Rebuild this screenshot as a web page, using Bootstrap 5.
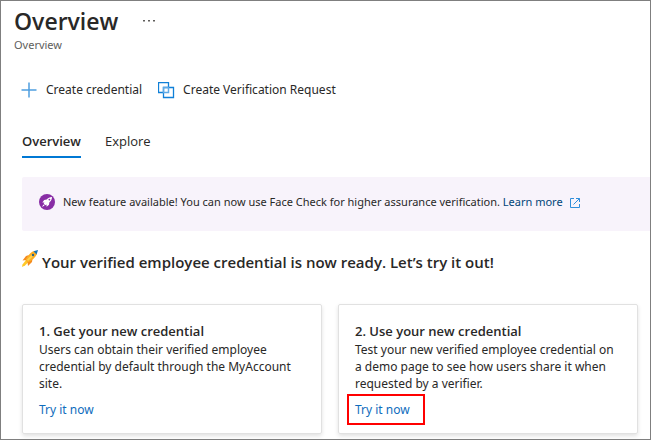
<!DOCTYPE html>
<html lang="en">
<head>
<meta charset="utf-8">
<meta name="viewport" content="width=device-width, initial-scale=1">
<title>Overview</title>
<link rel="stylesheet" href="https://cdn.jsdelivr.net/npm/bootstrap@5.3.0/dist/css/bootstrap.min.css">
<style>
body{font-family:"Segoe UI","Noto Sans","Open Sans",sans-serif;font-size:12px;line-height:17px;color:#292827;background:#fff}
h1,h2,h3,.tabs{font-family:"Segoe UI","Open Sans","Noto Sans",sans-serif}
.blade{border:1px solid #7f7f7f;min-height:100vh;overflow:hidden}
.blade-head{padding:4px 13px 0}
.blade-title{font-size:23px;line-height:32px;font-weight:600}
.blade-sub{color:#605e5c;font-size:11px;line-height:16px}
.more-btn{color:#605e5c;line-height:0}
.commands{padding:28px 20px 0;gap:16px}
.commands .btn{font-size:12px;line-height:18px;color:#292827;padding:0;border:0;border-radius:0}
.blade-body{padding:30px 0 5px 21px}
.tabs{gap:24px}
.tabs .nav-link{font-size:13px;line-height:24px;padding:0 0 3px;color:#292827;border-radius:0;border-bottom:2px solid transparent}
.tabs .nav-link.active{font-weight:600;border-color:#0078d4}
.notice{background:#f8f3fb;margin-top:19px;padding:14px 17px 18px;min-height:54px;gap:8px;font-size:11px;line-height:20px;border-radius:2px 0 0 2px}
.notice a{color:#004578;text-decoration:none}
.ready{font-size:15px;line-height:20px;font-weight:600;margin:19px 0 32px;gap:4px}
.ready span{padding-top:2px}
.tiles{--bs-gutter-x:16px;margin-right:4px}
.tile{border:1px solid #e1e1e1;border-radius:2px;box-shadow:0 2px 4px rgba(0,0,0,.12);padding:17px 16px 8px}
.tile h3{font-size:13px;line-height:19px;font-weight:600;margin:0}
.tile p{margin:0 0 2px}
.try{color:#0f6cbd;text-decoration:none;line-height:27px;padding:0 13px 0 6px;margin-left:-8px;border:2px solid transparent}
.try.marked{border-color:#f00}
</style>
<script defer src="https://cdn.jsdelivr.net/npm/bootstrap@5.3.0/dist/js/bootstrap.bundle.min.js"></script>
</head>
<body>
<main class="blade">
  <header class="blade-head">
    <div class="d-flex align-items-center gap-4">
      <h1 class="blade-title m-0">Overview</h1>
      <button type="button" class="btn p-0 border-0 more-btn" aria-label="More options">
        <svg width="14" height="4" viewBox="0 0 14 4" fill="currentColor"><path d="M1 1h2v1.500H1zM6 1h2v1.500H6zM11 1h2v1.500h-2z"/></svg>
      </button>
    </div>
    <div class="blade-sub">Overview</div>
  </header>
  <div class="d-flex flex-wrap commands">
    <button type="button" class="btn d-flex align-items-center gap-2">
      <svg width="17" height="17" viewBox="0 0 17 17" fill="none" stroke="#4f9fe0" stroke-width="1.500"><path d="M8 .500v15M.500 8h15"/></svg>
      <span>Create credential</span>
    </button>
    <button type="button" class="btn d-flex align-items-center gap-2">
      <svg width="17" height="17" viewBox="0 0 17 17" fill="none"><path d="M5.500 10.500h-5v-10h10v5" stroke="#1080d8" stroke-width="1.300"/><path d="M5.500 5.500h10v10h-10z" stroke="#1080d8" stroke-width="1.300"/><path d="M5.500 10.500v-5h5v5z" stroke="#5ea9e6" stroke-width="1.500"/></svg>
      <span>Create Verification Request</span>
    </button>
  </div>
  <div class="blade-body">
    <ul class="nav tabs" role="tablist">
      <li class="nav-item" role="presentation"><button type="button" class="nav-link bg-transparent border-top-0 border-start-0 border-end-0 active" role="tab" aria-selected="true">Overview</button></li>
      <li class="nav-item" role="presentation"><button type="button" class="nav-link bg-transparent border-top-0 border-start-0 border-end-0" role="tab" aria-selected="false">Explore</button></li>
    </ul>
    <div class="d-flex align-items-center notice">
      <svg class="flex-shrink-0" width="16" height="16" viewBox="0 0 16 16"><circle cx="8" cy="8" r="8" fill="#882da5"/><path d="M13 3c-2.300 0-4 .900-5.300 2.600L5.200 6 3.300 8.400l2.100.100-.700 1.200 1.600 1.600 1.200-.700.100 2.100L10 10.800l.400-2.500C12.100 7 13 5.300 13 3zM4.400 10.400 3 13l2.600-1.400z" fill="#fff"/><circle cx="10.400" cy="5.600" r=".9" fill="#882da5"/></svg>
      <span>New feature available! You can now use Face Check for higher assurance verification. <a href="#">Learn more
        <svg class="ms-1" width="10" height="10" viewBox="0 0 10 10" fill="none" stroke="#2f8edb"><path d="M4 .500H.500v9h9V6M6 .500h3.500V4M9.500.500 3.500 6.500"/></svg></a></span>
    </div>
    <h2 class="d-flex align-items-start ready">
      <svg class="flex-shrink-0" width="16" height="17" viewBox="0 0 16 17"><path d="M4 10 .500 14.500 0 17l3-1.500L6.500 12z" fill="#ffc928"/><path d="M7 5 4 6 .500 10.500 4 10zM10.500 9 10 12l-4 4-.500-4z" fill="#f58b1f"/><path d="M12 1C8 2.500 5.500 6 3.500 10.500L5.500 12.500C10 10.500 13 8 15 4z" fill="#fcae22"/><path d="M5 9.500 10 4.500l1.500 1.500L6 11z" fill="#ffd34d"/><path d="M16 0 11.500 1.200 14.600 4.500z" fill="#1674b8"/><circle cx="11" cy="5" r="1.200" fill="#26658b"/></svg>
      <span>Your verified employee credential is now ready. Let’s try it out!</span>
    </h2>
    <div class="row tiles">
      <div class="col-6">
        <section class="tile h-100 d-flex flex-column align-items-start">
          <h3>1. Get your new credential</h3>
          <p>Users can obtain their verified employee credential by default through the MyAccount site.</p>
          <a class="try" href="#">Try it now</a>
        </section>
      </div>
      <div class="col-6">
        <section class="tile h-100 d-flex flex-column align-items-start">
          <h3>2. Use your new credential</h3>
          <p>Test your new verified employee credential on a demo page to see how users share it when requested by a verifier.</p>
          <a class="try marked" href="#">Try it now</a>
        </section>
      </div>
    </div>
  </div>
</main>
</body>
</html>
